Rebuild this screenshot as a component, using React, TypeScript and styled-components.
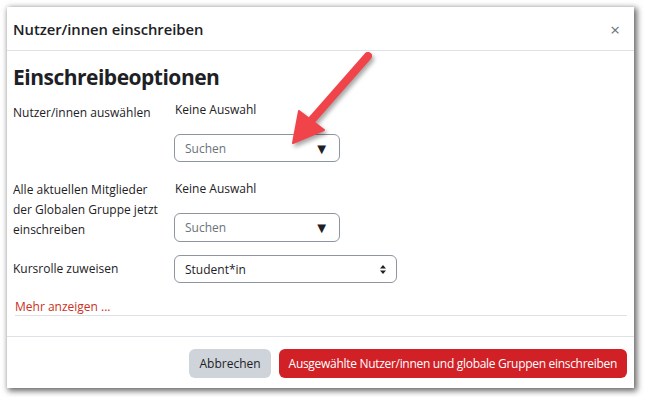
import React from 'react'
import styled, { createGlobalStyle } from 'styled-components'

const GlobalStyle = createGlobalStyle`
  body {
    margin: 0;
    background: #ffffff;
    font-family: "Open Sans", "Noto Sans", Arial, sans-serif;
    color: #1d2125;
  }
`

const Page = styled.div`
  width: 645px;
  height: 397px;
  padding: 7px 0 0 7px;
  box-sizing: border-box;
  background: #fff;
`

const Modal = styled.div`
  position: relative;
  width: 627px;
  height: 381px;
  background: #fff;
  display: flex;
  flex-direction: column;
  box-shadow: 2px 2px 6px 1px rgba(0, 0, 0, 0.6);
`

const Header = styled.div`
  height: 43px;
  flex: none;
  display: flex;
  align-items: center;
  justify-content: space-between;
  padding: 0 14px 0 6px;
  border-bottom: 1px solid #dee2e6;
`

const Title = styled.h5`
  margin: 0;
  font-size: 14.8px;
  font-weight: 600;
  letter-spacing: -0.05px;
`

const Close = styled.span`
  font-size: 17px;
  line-height: 1;
  color: #6a737b;
  margin-top: 2px;
`

const Body = styled.div`
  flex: 1;
  padding: 13px 7px 0 6px;
`

const Heading = styled.h3`
  margin: 0 0 11px;
  font-size: 21px;
  line-height: 26px;
  font-weight: 700;
  letter-spacing: -0.5px;
`

const Row = styled.div<{ gap?: number }>`
  display: grid;
  grid-template-columns: 161px 1fr;
  margin-bottom: ${({ gap }) => (gap ?? 15)}px;
`

const Label = styled.div<{ offset?: number }>`
  font-size: 12px;
  line-height: 20px;
  padding-top: ${({ offset }) => (offset ?? 0)}px;
  padding-right: 12px;
  color: #1d2125;
`

const Field = styled.div`
  display: flex;
  flex-direction: column;
  align-items: flex-start;
  gap: 14px;
`

const Info = styled.div`
  font-size: 12px;
  line-height: 20px;
  padding-left: 1px;
  margin-top: -1px;
`

const Select = styled.div<{ w: number; h?: number; muted?: boolean }>`
  width: ${({ w }) => w}px;
  height: ${({ h }) => h ?? 28}px;
  box-sizing: border-box;
  border: 1px solid #8f959e;
  border-radius: 6px;
  display: flex;
  align-items: center;
  justify-content: space-between;
  padding: 0 10px 0 10px;
  font-size: 12px;
  color: ${({ muted }) => (muted ? '#6a737b' : '#1d2125')};
`

const Caret = styled.span`
  font-size: 15px;
  line-height: 1;
  color: #1d2125;
`

const More = styled.div`
  margin: 16px 0 0 2px;
  font-size: 12px;
  line-height: 16px;
  color: #ca3120;
  border-bottom: 1px solid #dee2e6;
`

const Footer = styled.div`
  height: 52px;
  flex: none;
  border-top: 1px solid #dee2e6;
  display: flex;
  justify-content: flex-end;
  align-items: flex-start;
  gap: 8px;
  padding: 12px 7px 0 0;
  box-sizing: border-box;
`

const Button = styled.button<{ primary?: boolean }>`
  height: 29px;
  border: none;
  border-radius: 6px;
  padding: 0 10px;
  font-family: inherit;
  font-size: 12px;
  letter-spacing: ${({ primary }) => (primary ? '-0.3px' : '0')};
  background: ${({ primary }) => (primary ? '#d12026' : '#ced4da')};
  color: ${({ primary }) => (primary ? '#fff' : '#1d2125')};
`

const ArrowLayer = styled.svg`
  position: absolute;
  left: 0;
  top: 0;
  pointer-events: none;
  filter: drop-shadow(2px 3px 2px rgba(0, 0, 0, 0.35));
`

const SortIcon = () => (
  <svg width="6" height="9" viewBox="0 0 6 9">
    <path d="M3 0 L6 3.5 H0 Z M3 9 L0 5.5 H6 Z" fill="#1d2125" />
  </svg>
)

export default function App() {
  // arrow coordinates are relative to the modal (page minus 7px)
  return (
    <>
      <GlobalStyle />
      <Page>
        <Modal>
          <Header>
            <Title>Nutzer/innen einschreiben</Title>
            <Close>×</Close>
          </Header>
          <Body>
            <Heading>Einschreibeoptionen</Heading>
            <Row gap={18}>
              <Label offset={2}>Nutzer/innen auswählen</Label>
              <Field>
                <Info>Keine Auswahl</Info>
                <Select w={166} muted>
                  Suchen
                  <Caret>▼</Caret>
                </Select>
              </Field>
            </Row>
            <Row gap={13}>
              <Label>Alle aktuellen Mitglieder der Globalen Gruppe jetzt einschreiben</Label>
              <Field>
                <Info>Keine Auswahl</Info>
                <Select w={166} h={29} muted>
                  Suchen
                  <Caret>▼</Caret>
                </Select>
              </Field>
            </Row>
            <Row gap={0}>
              <Label offset={4}>Kursrolle zuweisen</Label>
              <Field>
                <Select w={223}>
                  Student*in
                  <SortIcon />
                </Select>
              </Field>
            </Row>
            <More>Mehr anzeigen ...</More>
          </Body>
          <Footer>
            <Button>Abbrechen</Button>
            <Button primary>Ausgewählte Nutzer/innen und globale Gruppen einschreiben</Button>
          </Footer>
          <ArrowLayer width="627" height="381" viewBox="0 0 627 381">
            <line x1="361" y1="49" x2="303" y2="115" stroke="#f0444a" strokeWidth="8" strokeLinecap="round" />
            <polygon points="286,136 292,104 317,123" fill="#f0444a" stroke="#f0444a" strokeWidth="2" strokeLinejoin="round" />
          </ArrowLayer>
        </Modal>
      </Page>
    </>
  )
}
